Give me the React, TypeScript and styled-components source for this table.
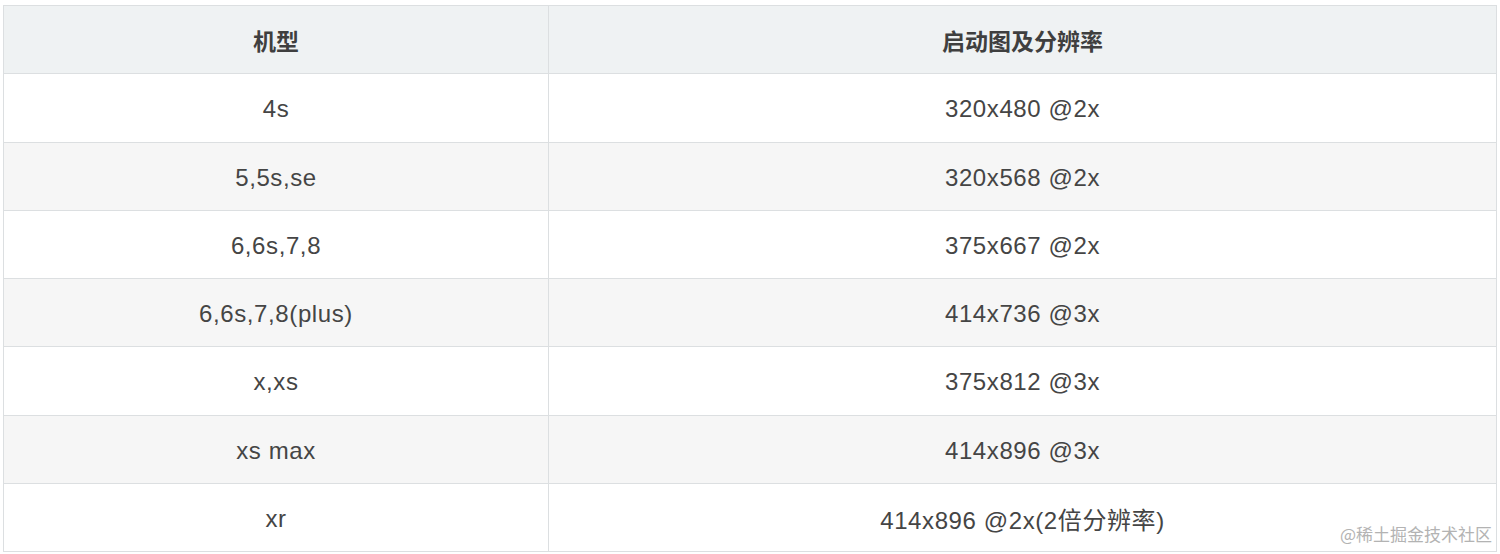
import styled, { createGlobalStyle } from 'styled-components'

const GlobalStyle = createGlobalStyle`
  html, body {
    margin: 0;
    padding: 0;
    background: #ffffff;
  }
  body {
    font-family: "Liberation Sans", "Noto Sans CJK SC", sans-serif;
  }
`

const rows: [string, string][] = [
  ['4s', '320x480 @2x'],
  ['5,5s,se', '320x568 @2x'],
  ['6,6s,7,8', '375x667 @2x'],
  ['6,6s,7,8(plus)', '414x736 @3x'],
  ['x,xs', '375x812 @3x'],
  ['xs max', '414x896 @3x'],
  ['xr', '414x896 @2x(2倍分辨率)'],
]

const Page = styled.div`
  position: relative;
  width: 1500px;
  height: 554px;
  padding: 5px 0 0 3px;
  box-sizing: border-box;
`

const Table = styled.table`
  width: 1494px;
  border-collapse: collapse;
  table-layout: fixed;
  color: #454545;
  font-size: 24px;
`

const HeadCell = styled.th`
  height: 67.25px;
  padding: 0;
  background: #eff2f3;
  border: 1px solid #dcdfe1;
  font-weight: 700;
  text-align: center;
  vertical-align: middle;
  font-family: "Noto Sans CJK SC", sans-serif;
  font-size: 23px;
  color: #3f3f3f;
`

const Row = styled.tr<{ $striped: boolean }>`
  background: ${(p) => (p.$striped ? '#f6f6f6' : '#ffffff')};
`

const Cell = styled.td`
  height: 64.25px;
  padding: 3px 0 0;
  border: 1px solid #dcdfe1;
  text-align: center;
  vertical-align: middle;
  letter-spacing: 0.6px;
`

const Watermark = styled.div`
  position: absolute;
  right: 8px;
  bottom: 8px;
  font-family: "Noto Sans CJK SC", sans-serif;
  font-size: 17px;
  color: #b3b3b3;
  text-shadow: 0 0 1px #ffffff;
`

export default function App() {
  return (
    <>
      <GlobalStyle />
      <Page>
        <Table>
          <colgroup>
            <col style={{ width: 545 }} />
            <col />
          </colgroup>
          <thead>
            <tr>
              <HeadCell>机型</HeadCell>
              <HeadCell>启动图及分辨率</HeadCell>
            </tr>
          </thead>
          <tbody>
            {rows.map(([model, size], i) => (
              <Row key={model} $striped={i % 2 === 1}>
                <Cell>{model}</Cell>
                <Cell>{size}</Cell>
              </Row>
            ))}
          </tbody>
        </Table>
        <Watermark>@稀土掘金技术社区</Watermark>
      </Page>
    </>
  )
}
